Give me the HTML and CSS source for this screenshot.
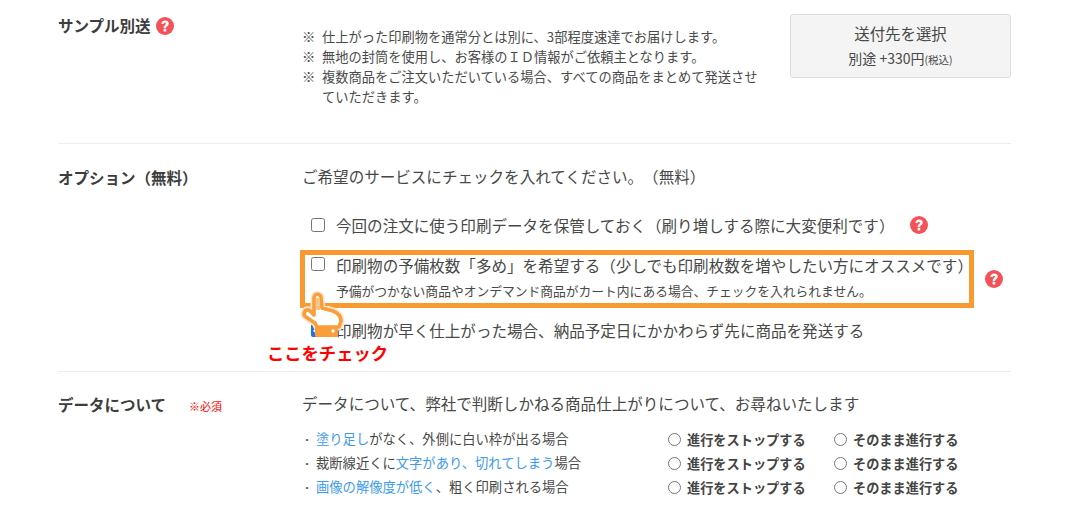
FILE: index.html
```html
<!DOCTYPE html>
<html lang="ja">
<head>
<meta charset="utf-8">
<title>オプション</title>
<link rel="stylesheet" href="styles.css">
</head>
<body>
<svg class="defs" width="0" height="0" aria-hidden="true">
  <symbol id="help" viewBox="0 0 18 18">
    <circle cx="9" cy="9" r="9" fill="#f55257"/>
    <path d="M5.400 7C5.400 4.900 6.900 3.500 9.100 3.500c2.200 0 3.700 1.300 3.700 3.100 0 1.300-.7 2-1.700 2.700-.7.500-.9.800-.9 1.500v.4H7.700v-.6c0-1.200.4-1.800 1.200-2.400.7-.5 1-.9 1-1.400 0-.6-.4-1-1-1-.7 0-1.100.500-1.100 1.300z" fill="#fff"/>
    <rect x="7.600" y="12" width="2.600" height="2.500" rx=".6" fill="#fff"/>
  </symbol>
</svg>
<main class="page">
  <section class="row row-sample">
    <h2 class="label">サンプル別送<svg class="help help-label"><use href="#help"/></svg></h2>
    <div class="content sample">
      <ul class="notes">
        <li>仕上がった印刷物を通常分とは別に、3部程度速達でお届けします。</li>
        <li>無地の封筒を使用し、お客様のＩＤ情報がご依頼主となります。</li>
        <li>複数商品をご注文いただいている場合、すべての商品をまとめて発送させていただきます。</li>
      </ul>
      <button class="ship" type="button">
        <span class="ship-title">送付先を選択</span>
        <span class="ship-price">別途 +330円<small>(税込)</small></span>
      </button>
    </div>
  </section>

  <section class="row row-option">
    <h2 class="label">オプション（無料）</h2>
    <div class="content">
      <p class="lead">ご希望のサービスにチェックを入れてください。（無料）</p>
      <div class="opt opt-first">
        <input class="box" type="checkbox">
        <span>今回の注文に使う印刷データを保管しておく（刷り増しする際に大変便利です）</span>
        <svg class="help help-first"><use href="#help"/></svg>
      </div>
      <div class="highlight-wrap">
        <div class="highlight">
          <input class="box box-hl" type="checkbox">
          <div>
            <div class="hl-main">印刷物の予備枚数「多め」を希望する（少しでも印刷枚数を増やしたい方にオススメです）</div>
            <div class="hl-sub">予備がつかない商品やオンデマンド商品がカート内にある場合、チェックを入れられません。</div>
          </div>
        </div>
        <svg class="help help-second"><use href="#help"/></svg>
      </div>
      <div class="opt opt-last">
        <input class="box" type="checkbox" checked>
        <span>印刷物が早く仕上がった場合、納品予定日にかかわらず先に商品を発送する</span>
      </div>
    </div>
    <svg class="hand" viewBox="0 0 46 52" aria-hidden="true">
      <path d="M14 27V10C14 5 21 5 21 10L22 20 33 23C38 25 41 28 41 33L39 39H17L15 35 6 29C2 26 5 21 9 22Z" fill="#fff" stroke="#f7e6d0" stroke-width="7" stroke-linejoin="round"/>
      <path d="M14 27V10C14 5 21 5 21 10L22 20 33 23C38 25 41 28 41 33L39 39H17L15 35 6 29C2 26 5 21 9 22Z" fill="#fff" stroke="#fa9e3a" stroke-width="3.600" stroke-linejoin="round"/>
      <path d="M16 10h4v12h-4z" fill="#fcc68c"/>
      <rect x="15" y="38" width="23" height="11" rx="1.500" fill="#fa9e3a"/>
      <circle cx="33" cy="43" r="1.700" fill="#fff"/>
    </svg>
    <p class="callout">ここをチェック</p>
  </section>

  <section class="row row-data">
    <h2 class="label label-data">データについて<span class="req">※必須</span></h2>
    <div class="content">
      <p class="lead">データについて、弊社で判断しかねる商品仕上がりについて、お尋ねいたします</p>
      <div class="q-grid">
        <div class="q"><span class="dot">・</span><a class="link">塗り足し</a>がなく、外側に白い枠が出る場合</div>
        <label class="radio"><input type="radio" name="a">進行をストップする</label>
        <label class="radio"><input type="radio" name="a">そのまま進行する</label>
        <div class="q"><span class="dot">・</span>裁断線近くに<a class="link">文字があり、切れてしまう</a>場合</div>
        <label class="radio"><input type="radio" name="b">進行をストップする</label>
        <label class="radio"><input type="radio" name="b">そのまま進行する</label>
        <div class="q"><span class="dot">・</span><a class="link">画像の解像度が低く</a>、粗く印刷される場合</div>
        <label class="radio"><input type="radio" name="c">進行をストップする</label>
        <label class="radio"><input type="radio" name="c">そのまま進行する</label>
      </div>
    </div>
  </section>
</main>
</body>
</html>
```

FILE: styles.css
```css
* { box-sizing: border-box; }
html, body { margin: 0; padding: 0; background: #fff; }
body {
  height: 517px;
  overflow: hidden;
  color: #484848;
  font-family: "Noto Sans CJK JP", "Noto Sans", sans-serif;
  text-spacing-trim: space-all;
}
.defs { position: absolute; }
.page { width: 953px; margin-left: 58px; }
.row {
  position: relative;
  display: grid;
  grid-template-columns: 244px 1fr;
  border-bottom: 1px solid #ececec;
}
.row-sample { height: 144px; padding-top: 14px; }
.row-option { height: 228px; padding-top: 22px; }
.row-data { padding-top: 21px; border-bottom: 0; }
.label {
  margin: -1px 0 0;
  font-size: 15.5px;
  line-height: 24px;
  font-weight: 700;
  color: #3d3d3d;
  display: flex;
  align-items: flex-start;
}
.help { display: block; width: 18px; height: 18px; flex: none; }
.help-label { margin: 4px 0 0 5px; }
.content { min-width: 0; }
.sample { display: flex; align-items: flex-start; }
.notes {
  list-style: none;
  margin: 13px 32px 0 0;
  padding: 0;
  width: 456px;
  font-size: 13.25px;
  line-height: 20px;
  color: #4a4a4a;
}
.notes li { position: relative; padding-left: 20px; }
.notes li::before { content: "※"; position: absolute; left: 0; }
.ship {
  display: flex;
  flex-direction: column;
  align-items: center;
  width: 221px;
  height: 64px;
  padding: 7px 0 0;
  background: #f4f4f4;
  border: 1px solid #ddd;
  border-radius: 3px;
  font-family: inherit;
  color: #484848;
}
.ship-title { font-size: 15.4px; line-height: 22px; }
.ship-price { font-size: 14px; line-height: 18px; margin-top: 5px; }
.ship-price small { font-size: 10.5px; }
.lead { margin: -2px 0 0; font-size: 15.55px; line-height: 24px; white-space: nowrap; }
.opt {
  display: flex;
  align-items: center;
  font-size: 15.55px;
  line-height: 24px;
  white-space: nowrap;
  padding-left: 9px;
}
.box { width: 14px; height: 14px; margin: 0 11px 0 0; flex: none; accent-color: #1a73e8; }
.opt-first { margin-top: 25px; height: 24px; }
.help-first { margin-left: 16px; }
.highlight-wrap { display: flex; align-items: center; margin: 13px 0 0 -2px; }
.highlight {
  display: flex;
  align-items: flex-start;
  width: 674px;
  height: 58px;
  padding: 0 0 0 6px;
  border: 5px solid #f99a31;
  white-space: nowrap;
}
.box-hl { margin: 2px 11px 0 0; }
.hl-main { font-size: 15.55px; line-height: 20px; }
.hl-sub { font-size: 12.78px; line-height: 18px; margin-top: 7px; }
.help-second { margin-left: 11px; }
.opt-last { margin-top: 10px; }
.hand { position: absolute; left: 242px; top: 144px; width: 46px; height: 52px; }
.callout {
  position: absolute;
  left: 209px;
  top: 198px;
  margin: 0;
  font-size: 17.3px;
  line-height: 22px;
  font-weight: 700;
  color: #f00;
  white-space: nowrap;
}
.label-data { display: block; position: relative; }
.req { position: absolute; left: 131px; top: 2px; font-size: 11px; color: #f00; font-weight: 400; }
.q-grid {
  display: grid;
  grid-template-columns: 366px 166px auto;
  grid-auto-rows: 24px;
  margin-top: 12px;
  align-items: center;
}
.q { font-size: 13.3px; white-space: nowrap; margin-top: -2px; }
.dot { display: inline-block; width: 14px; font-size: 10px; }
.link { color: #3d9be9; }
.radio {
  display: flex;
  align-items: center;
  font-size: 13.2px;
  font-weight: 700;
  color: #444;
  white-space: nowrap;
}
.radio input { width: 13px; height: 13px; margin: 0 6px 0 0; }
```
